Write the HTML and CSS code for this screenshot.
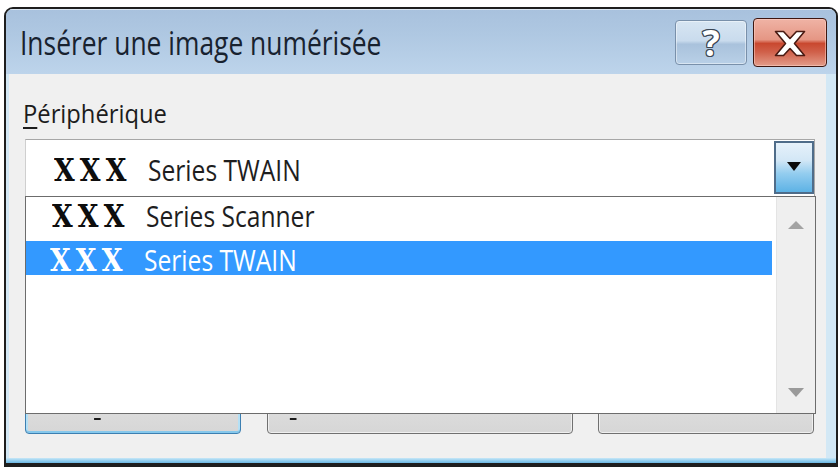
FILE: index.html
```html
<!DOCTYPE html>
<html lang="fr">
<head>
<meta charset="utf-8">
<title>Insérer une image numérisée</title>
<link rel="stylesheet" href="styles.css">
</head>
<body>
<div class="window">
  <div class="titlebar">
    <span class="title">Insérer une image numérisée</span>
    <div class="tb-btn help"><span class="help-glyph">?</span></div>
    <div class="tb-btn close">
      <svg class="close-glyph" width="32" height="27" viewBox="0 0 32 27">
        <polygon points="1.5,1.5 9.5,1.5 16,8.5 22.5,1.5 30.5,1.5 20.5,13.5 30.5,25.5 22.5,25.5 16,18.5 9.5,25.5 1.5,25.5 11.5,13.5" fill="#ffffff" stroke="#4a1a12" stroke-width="1.6" stroke-linejoin="round"/>
      </svg>
    </div>
  </div>
  <div class="client">
    <div class="field-label"><span class="sx-body"><u>P</u>ériphérique</span></div>
    <div class="combo-wrap">
      <div class="combo">
        <div class="combo-value"><span class="brand">XXX</span><span class="name">Series TWAIN</span></div>
        <div class="combo-btn">
          <svg width="14" height="9" viewBox="0 0 14 9"><polygon points="0,0 14,0 7,9" fill="#0a0a0a"/></svg>
        </div>
      </div>
      <div class="dropdown">
        <ul class="items">
          <li class="item first"><span class="brand">XXX</span><span class="name">Series Scanner</span></li>
          <li class="item selected"><span class="brand">XXX</span><span class="name">Series TWAIN</span></li>
        </ul>
        <div class="vscroll">
          <svg width="16" height="8" viewBox="0 0 16 8"><polygon points="8,0 16,8 0,8" fill="#a3a3a3"/></svg>
          <svg width="16" height="9" viewBox="0 0 16 9"><polygon points="0,0 16,0 8,9" fill="#9a9a9a"/></svg>
        </div>
      </div>
    </div>
    <div class="buttons">
      <button class="btn default"><span class="sx-btn"><u>I</u>nsérer</span></button>
      <button class="btn wide"><span class="sx-btn"><u>I</u>nsertion personnalisée</span></button>
      <button class="btn"><span class="sx-btn">Annuler</span></button>
    </div>
  </div>
  <div class="frame-bottom"></div>
</div>
</body>
</html>
```

FILE: styles.css
```css
* { box-sizing: border-box; }

html, body {
  margin: 0;
  padding: 0;
}

body {
  width: 840px;
  height: 467px;
  overflow: hidden;
  background: #ffffff;
  font-family: "Open Sans", "Noto Sans", sans-serif;
}

.window {
  margin: 7px 0 0 4px;
  width: 834px;
  height: 460px;
  border: 2px solid #1e1e1e;
  border-bottom-width: 4px;
  border-radius: 9px 9px 0 0;
  background: #d3e8f5;
  display: flex;
  flex-direction: column;
  overflow: hidden;
}

/* ---------- title bar ---------- */
.titlebar {
  height: 65px;
  flex: 0 0 65px;
  display: flex;
  align-items: center;
  padding: 2px 9px 0 14px;
  background: linear-gradient(to bottom, #a8c1dd 0%, #afc8e2 40%, #bdd4eb 100%);
  box-shadow: inset 0 1px 0 #dbe7f3;
}

.title {
  display: inline-block;
  font-size: 33px;
  line-height: 45px;
  color: #18222f;
  white-space: nowrap;
  transform: scaleX(0.8);
  transform-origin: left center;
}

.tb-btn {
  display: flex;
  align-items: center;
  justify-content: center;
  border-radius: 4px;
}

.help {
  margin-left: auto;
  width: 72px;
  height: 45px;
  border: 1px solid #7990aa;
  background: linear-gradient(to bottom, #d7e5f2 0%, #c9dbed 46%, #a9c2dc 54%, #b9d0e7 100%);
  box-shadow: inset 0 0 0 1px rgba(255, 255, 255, 0.45);
}

.help-glyph {
  font-family: "Open Sans", "Noto Sans", sans-serif;
  font-weight: bold;
  font-size: 36px;
  line-height: 36px;
  color: #ffffff;
  text-shadow: 1px 0 0 #3b4654, -1px 0 0 #3b4654, 0 1px 0 #3b4654, 0 -1px 0 #3b4654,
    1px 1px 0 #3b4654, -1px -1px 0 #3b4654, 1px -1px 0 #3b4654, -1px 1px 0 #3b4654;
}

.close {
  margin-left: 6px;
  width: 74px;
  height: 49px;
  border: 1px solid #3e1710;
  background: linear-gradient(to bottom, #efb3a5 0%, #e59684 44%, #c9482f 52%, #d0604a 70%, #e39c89 100%);
  box-shadow: inset 0 0 0 1px rgba(255, 215, 205, 0.5);
}

.close-glyph {
  display: block;
  margin-top: 1px;
}

/* ---------- client area ---------- */
.client {
  flex: 0 0 384px;
  height: 384px;
  margin: 0 10px 0 3px;
  background: #f0f0f0;
  padding: 0 0 0 16px;
  display: flex;
  flex-direction: column;
}

.field-label {
  margin: 22px 0 0 -2px;
  height: 34px;
  font-size: 25px;
  line-height: 34px;
  color: #1c1c1c;
}

.sx-body {
  display: inline-block;
  transform: scaleX(0.95);
  transform-origin: left center;
  white-space: nowrap;
}

.sx-body u {
  text-underline-offset: 4px;
}

.combo-wrap {
  position: relative;
  margin-top: 9px;
  width: 790px;
}

.combo {
  height: 58px;
  display: flex;
  align-items: stretch;
  background: #ffffff;
  border: 1px solid #a7a7a7;
  border-left-color: #cfcfcf;
  border-bottom-color: #707070;
}

.combo-value {
  flex: 1;
  display: flex;
  align-items: center;
  padding: 3px 0 0 28px;
}

.brand {
  display: inline-block;
  width: 72px;
  font-family: "DejaVu Serif", "Liberation Serif", serif;
  font-weight: bold;
  font-size: 31px;
  line-height: 34px;
  letter-spacing: 6px;
  color: #0d0d0d;
  white-space: nowrap;
  transform: scaleX(0.86);
  transform-origin: left center;
}

.name {
  display: inline-block;
  margin-left: 22px;
  font-size: 30px;
  line-height: 34px;
  color: #1e1e1e;
  white-space: nowrap;
  transform: scaleX(0.82);
  transform-origin: left center;
}

.combo-btn {
  width: 40px;
  margin: 1px 0 2px 0;
  border: 2px solid #4f6c89;
  display: flex;
  align-items: center;
  justify-content: center;
  padding-bottom: 2px;
  background: linear-gradient(to bottom, #e6f1fa 0%, #d3e7f6 35%, #94cdef 62%, #5db2e5 100%);
}

/* ---------- dropdown list (overlay) ---------- */
.dropdown {
  position: absolute;
  top: 100%;
  left: 0;
  width: 791px;
  height: 218px;
  margin-top: -1px;
  border: 1px solid #6c6c6c;
  background: #ffffff;
  display: flex;
  z-index: 2;
}

.items {
  list-style: none;
  margin: 0;
  padding: 0;
  flex: 1;
}

.item {
  display: flex;
  align-items: center;
  margin-right: 4px;
  padding-left: 26px;
}

.item.first {
  height: 44px;
  padding-bottom: 6px;
}

.item.selected {
  height: 34px;
  padding-top: 4px;
  background: #3399ff;
  padding-left: 24px;
}

.item.selected .brand,
.item.selected .name {
  color: #ffffff;
}

.vscroll {
  width: 39px;
  background: #efefef;
  border-left: 1px solid #e4e4e4;
  display: flex;
  flex-direction: column;
  align-items: center;
  justify-content: space-between;
  padding: 24px 0 16px 0;
}

.vscroll svg {
  display: block;
}

/* ---------- buttons (partly hidden under the list) ---------- */
.buttons {
  margin-top: 189px;
  display: flex;
  gap: 26px;
}

.btn {
  height: 48px;
  width: 216px;
  padding: 0;
  border: 1px solid #707070;
  border-radius: 4px;
  background: linear-gradient(to bottom, #f2f2f2 0%, #ebebeb 50%, #dcdcdc 52%, #d6d6d6 100%);
  box-shadow: inset 0 0 0 1px rgba(255, 255, 255, 0.6);
  font-family: "Open Sans", "Noto Sans", sans-serif;
  font-size: 25px;
  line-height: 34px;
  color: #1c1c1c;
  display: flex;
  align-items: flex-start;
  justify-content: center;
}

.btn.default {
  border-color: #3c7fb1;
  box-shadow: inset 0 -2px 0 #86c8ec, inset 2px 0 0 #b5e0f5, inset -2px 0 0 #b5e0f5;
}

.btn.wide {
  width: 306px;
  margin-right: -1px;
}

.sx-btn {
  display: inline-block;
  margin-top: -9px;
  white-space: nowrap;
  transform: scaleX(0.95);
  transform-origin: center center;
}

.sx-btn u {
  text-decoration-thickness: 2px;
  text-underline-offset: 13px;
}

.frame-bottom {
  flex: 0 0 5px;
  height: 5px;
  background: linear-gradient(to bottom, #c8e7f7 0%, #8ccbee 60%, #6bb6e2 100%);
}
```
